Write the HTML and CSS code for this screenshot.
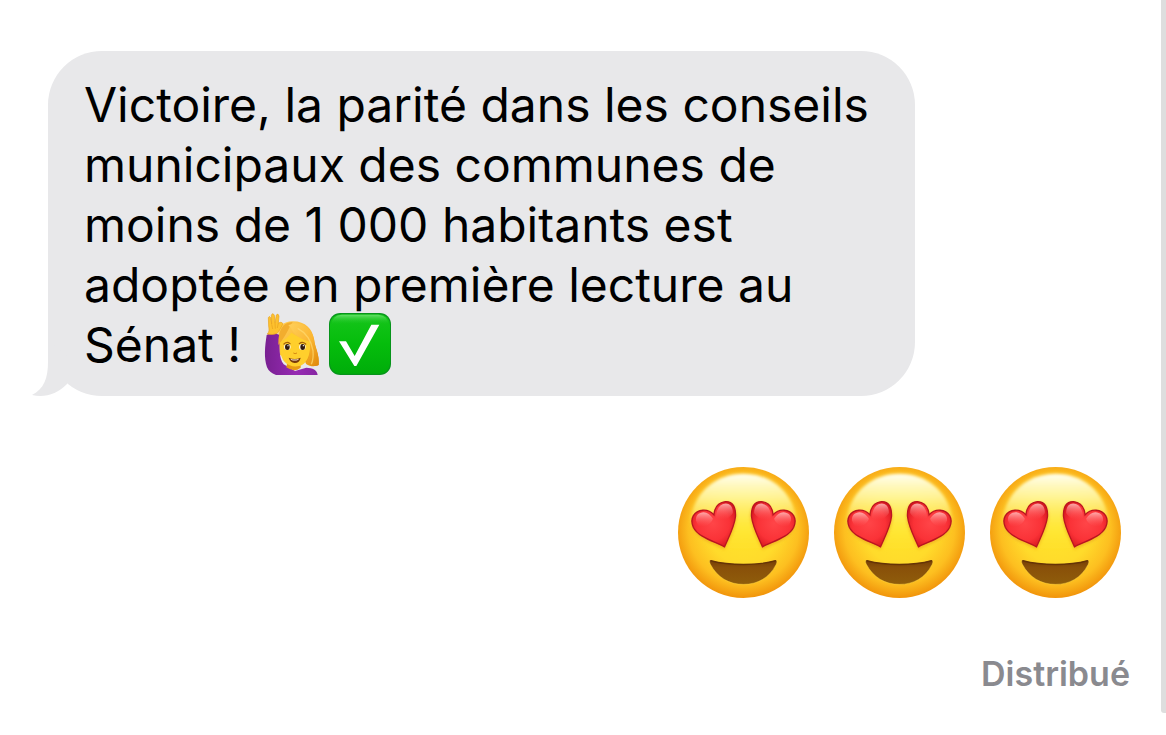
FILE: index.html
```html
<!DOCTYPE html>
<html lang="fr">
<head>
<meta charset="utf-8">
<meta name="viewport" content="width=device-width, initial-scale=1">
<title>Messages</title>
<link rel="stylesheet" href="styles.css">
</head>
<body>
<svg class="defs" aria-hidden="true">
  <defs>
    <radialGradient id="skin" cx="50%" cy="47%" r="54%">
      <stop offset="0" stop-color="#ffe52c"/><stop offset=".5" stop-color="#ffdb2b"/><stop offset=".78" stop-color="#fdbf20"/><stop offset="1" stop-color="#f09009"/>
    </radialGradient>
    <linearGradient id="shine" x1="0" y1="0" x2="0" y2="1">
      <stop offset="0" stop-color="#fffff0"/><stop offset=".3" stop-color="#fff9a8" stop-opacity=".85"/><stop offset=".7" stop-color="#ffec48" stop-opacity=".4"/><stop offset="1" stop-color="#ffe52c" stop-opacity="0"/>
    </linearGradient>
    <radialGradient id="heart" cx="48%" cy="48%" r="58%">
      <stop offset="0" stop-color="#ff4548"/><stop offset=".65" stop-color="#fa3237"/><stop offset="1" stop-color="#d81820"/>
    </radialGradient>
    <linearGradient id="gloss" x1="0" y1="0" x2="0" y2="1">
      <stop offset="0" stop-color="#ffb9b9" stop-opacity=".9"/><stop offset="1" stop-color="#ff5a5a" stop-opacity="0"/>
    </linearGradient>
    <linearGradient id="mouth" x1="0" y1="0" x2="0" y2="1">
      <stop offset="0" stop-color="#753e06"/><stop offset=".3" stop-color="#895009"/><stop offset="1" stop-color="#8f5d0b"/>
    </linearGradient>
    <filter id="soft" x="-20%" y="-20%" width="140%" height="140%"><feGaussianBlur stdDeviation="5"/></filter>
    <symbol id="love" viewBox="24 36 394 394">
      <circle cx="221" cy="233" r="197" fill="url(#skin)"/>
      <path d="M221 56C310 56 372 118 380 196C384 250 310 290 221 290C132 290 58 250 62 196C70 118 132 56 221 56Z" fill="url(#shine)" filter="url(#soft)"/>
      <g id="eye">
        <path d="M164 284C128 266 84 254 69 224C56 196 73 172 99 170C114 169 124 175 132 184C134 161 147 145 167 143C190 141 200 160 200 187C197 221 179 253 164 284Z" fill="#e99a18" opacity=".6" filter="url(#soft)"/>
        <path d="M164 276C128 258 84 246 70 217C58 190 73 168 99 166C114 165 124 171 132 180C134 157 147 142 167 140C189 139 198 157 197 184C194 215 177 246 164 276Z" fill="url(#heart)" stroke="#b91520" stroke-width="4"/>
        <path d="M78 196C77 180 87 173 101 172C112 172 121 179 129 192C123 211 99 220 85 213Z" fill="url(#gloss)"/>
        <path d="M138 188C139 161 150 147 168 146C182 147 189 156 189 174C178 193 153 201 138 188Z" fill="url(#gloss)"/>
      </g>
      <use href="#eye" transform="matrix(-1 0 0 1 442 0)"/>
      <path d="M125 317C180 332 262 332 315 317C322 315 323 321 319 329C299 370 262 389 221 389C177 389 142 368 121 328C117 319 119 315 125 317Z" fill="url(#mouth)" stroke="#ffd84a" stroke-opacity=".4" stroke-width="3"/>
      <path d="M123 318C180 333 262 333 317 318" fill="none" stroke="#653306" stroke-width="4" stroke-linecap="round"/>
    </symbol>
    <linearGradient id="green" x1="0" y1="0" x2="0" y2="1">
      <stop offset="0" stop-color="#16c51b"/><stop offset=".5" stop-color="#05bd0c"/><stop offset="1" stop-color="#00ad0a"/>
    </linearGradient>
    <linearGradient id="greenGloss" x1="0" y1="0" x2="0" y2="1">
      <stop offset="0" stop-color="#65df68"/><stop offset="1" stop-color="#13c31a" stop-opacity="0"/>
    </linearGradient>
    <linearGradient id="hair" x1="0" y1="0" x2="1" y2="1">
      <stop offset="0" stop-color="#ffd05b"/><stop offset=".55" stop-color="#fbb632"/><stop offset="1" stop-color="#df8709"/>
    </linearGradient>
    <linearGradient id="sleeve" x1="0" y1="0" x2="1" y2="0">
      <stop offset="0" stop-color="#792092"/><stop offset=".6" stop-color="#962bb3"/><stop offset="1" stop-color="#8625a2"/>
    </linearGradient>
  </defs>
</svg>

<main class="thread">
  <section class="message received">
    <p class="bubble">Victoire, la parité dans les conseils municipaux des communes de moins de 1&nbsp;000 habitants est adoptée en première lecture au Sénat&nbsp;! <span class="emojis"><svg class="emoji" viewBox="30 38 186 186" role="img" aria-label="Femme levant la main">
      <path d="M82 105C82 77 99 62 126 63C164 63 184 87 189 116C193 145 206 162 203 194C188 202 172 193 162 186L86 164Z" fill="url(#hair)"/>
      <path d="M47 104C42 137 38 172 48 201Q54 216 75 224H200C198 208 185 203 166 202L132 212L98 192C83 174 86 139 85 104Q66 92 47 104Z" fill="url(#sleeve)"/>
      <path d="M109 186H149V202Q130 218 106 201Z" fill="#e79b14"/>
      <path d="M88 124C101 118 112 110 121 97C139 110 158 116 177 122C180 154 172 184 153 194C137 202 114 199 101 185C89 171 85 149 88 124Z" fill="#ffcf2c"/>
      <path d="M82 134C82 87 95 66 125 65C113 82 107 105 82 134Z" fill="#f2ad2e"/>
      <path d="M120 83C126 102 151 119 177 124C178 145 178 173 164 190C181 201 194 198 203 194C205 158 192 145 189 116C180 76 143 61 112 75Z" fill="url(#hair)"/>
      <path d="M140 84Q178 104 186 151Q188 177 181 192" fill="none" stroke="#ffda70" stroke-width="4" opacity=".7"/>
      <path d="M49 101C56 94 54 86 53 77L52 52Q55 45 59 52L62 71L61 45Q65 35 70 45L72 68L76 44Q81 37 84 47L82 68Q91 62 96 70Q90 83 79 99Q65 105 49 101Z" fill="#fdc12e" stroke="#e9a31e" stroke-width="2"/>
      <path d="M62 72L65 86M72 68L73 85M82 68L79 83" fill="none" stroke="#e7a11d" stroke-width="2"/>
      <path d="M99 131Q108 122 117 130M145 130Q154 122 164 131" fill="none" stroke="#a86209" stroke-width="4" stroke-linecap="round"/>
      <ellipse cx="109" cy="140" rx="10" ry="9" fill="#fff8e6"/>
      <ellipse cx="154" cy="140" rx="10" ry="9" fill="#fff8e6"/>
      <ellipse cx="109" cy="140" rx="7" ry="9" fill="#30190b"/>
      <ellipse cx="155" cy="140" rx="7" ry="9" fill="#30190b"/>
      <circle cx="111" cy="136" r="2" fill="#fff"/><circle cx="157" cy="136" r="2" fill="#fff"/>
      <path d="M127 158Q132 162 138 158" fill="none" stroke="#d68b12" stroke-width="3"/>
      <path d="M113 172Q131 180 149 172Q146 188 131 188Q117 186 113 172Z" fill="#74370b"/>
      <path d="M118 175Q131 180 144 175L141 179Q131 182 121 179Z" fill="#fff2df"/>
    </svg><svg class="emoji" viewBox="237 38 186 186" role="img" aria-label="Validé">
      <rect x="237" y="38" width="186" height="186" rx="34" fill="#07941b"/>
      <rect x="240" y="42" width="180" height="178" rx="31" fill="url(#green)"/>
      <path d="M245 73Q246 44 276 43H385Q414 45 415 73Q330 64 245 73Z" fill="url(#greenGloss)"/>
      <path d="M267 123H288L314 167L364 73H388L319 197H313Z" fill="#fff"/>
    </svg></span></p>
    <svg class="tail" viewBox="0 0 40 56" aria-hidden="true"><path d="M16 0V22C16 38 12 49 0 55C13 58 25 54 35 44L40 20Z"/></svg>
  </section>

  <section class="message sent">
    <div class="reactions" role="img" aria-label="Trois visages aux yeux en cœur">
      <svg class="face"><use href="#love"/></svg>
      <svg class="face"><use href="#love"/></svg>
      <svg class="face"><use href="#love"/></svg>
    </div>
    <p class="status">Distribué</p>
  </section>
</main>
<div class="scroll-indicator"></div>
</body>
</html>
```
FILE: styles.css
```css
* {
  box-sizing: border-box;
}

body {
  margin: 0;
  background: #fff;
  color: #000;
  font-family: Inter, "Liberation Sans", sans-serif;
}

.defs {
  position: absolute;
  width: 0;
  height: 0;
}

.thread {
  display: flex;
  flex-direction: column;
  gap: 71px;
  padding: 51px 36px 40px 48px;
}

.message {
  display: flex;
  flex-direction: column;
}

.received {
  position: relative;
  align-items: flex-start;
}

.bubble {
  width: 81%;
  max-width: 867px;
  margin: 0;
  padding: 24px 36px 21px;
  border-radius: 54px;
  background: #e8e8ea;
  font-size: 48px;
  line-height: 60px;
}

.emojis {
  display: inline-flex;
  gap: 6px;
  margin: -8px 0 -8px 6px;
  vertical-align: -13px;
}

.emoji {
  width: 62px;
  height: 62px;
}

.tail {
  position: absolute;
  left: -16px;
  bottom: 0;
  width: 40px;
  height: 56px;
  fill: #e8e8ea;
}

.sent {
  align-items: flex-end;
}

.reactions {
  display: flex;
  gap: 25px;
  margin-right: 9px;
}

.face {
  width: 131px;
  height: 131px;
}

.status {
  margin: 56px 0 0;
  color: #8a8a8f;
  font-size: 34px;
  font-weight: 600;
  line-height: 40px;
}

.scroll-indicator {
  position: absolute;
  top: 0;
  right: 0;
  width: 5px;
  height: 97%;
  border-radius: 0 0 0 3px;
  background: #dedede;
}
```
